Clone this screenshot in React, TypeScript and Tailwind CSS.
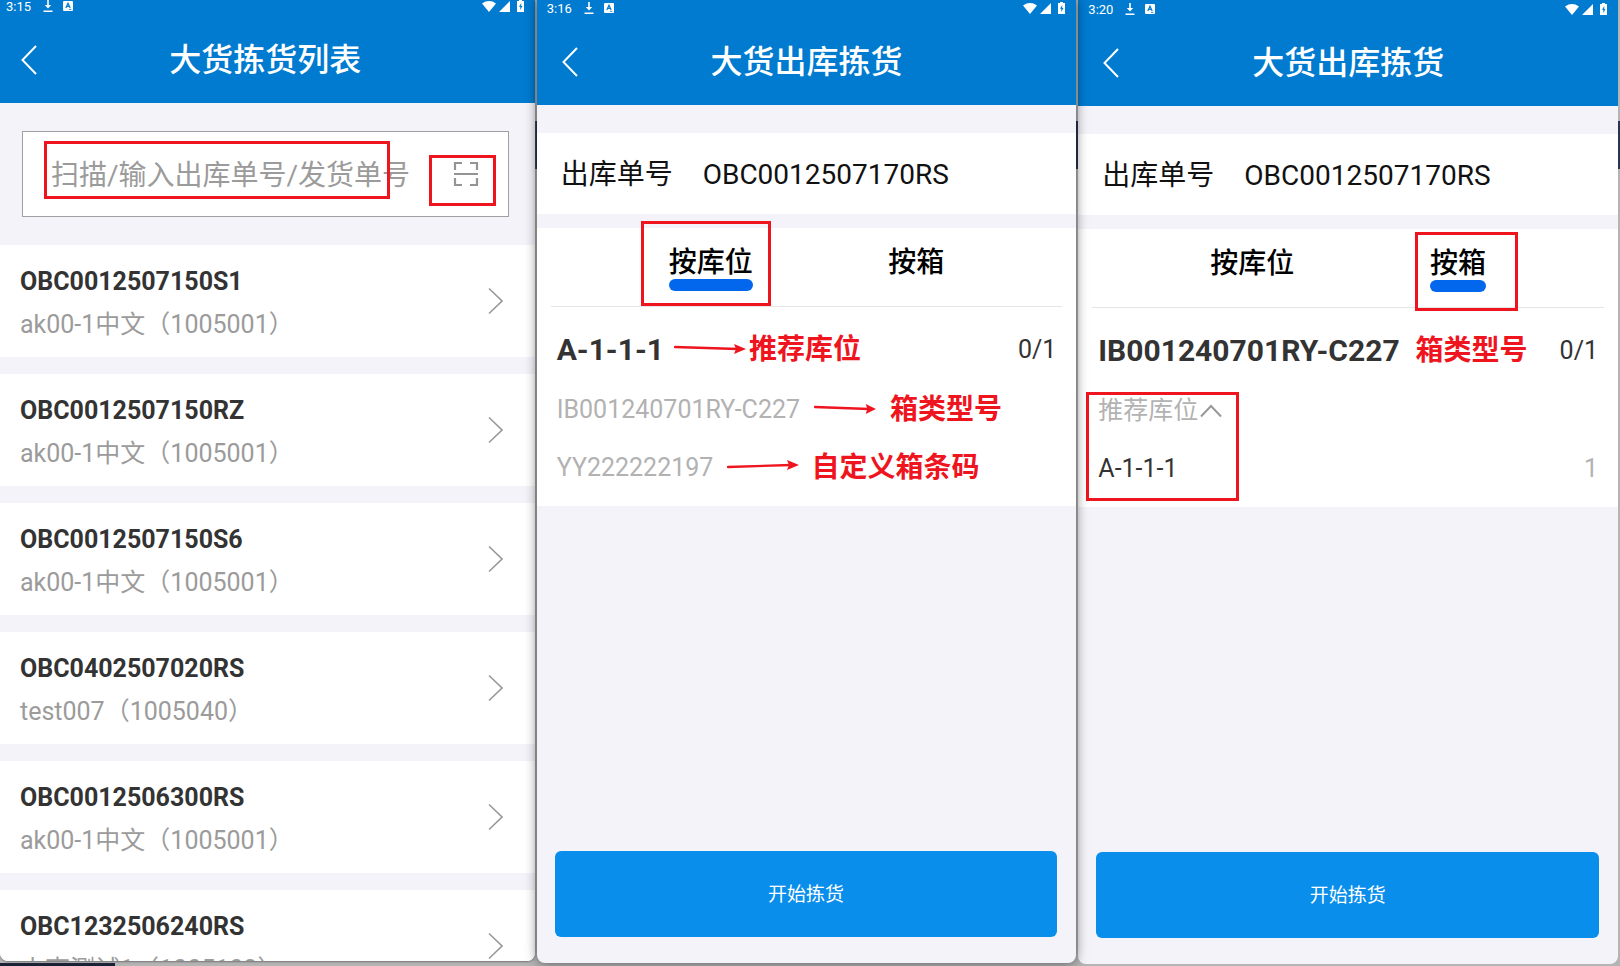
import React from 'react';

const orders = [
  { code: 'OBC0012507150S1', customer: 'ak00-1中文（1005001）' },
  { code: 'OBC0012507150RZ', customer: 'ak00-1中文（1005001）' },
  { code: 'OBC0012507150S6', customer: 'ak00-1中文（1005001）' },
  { code: 'OBC0402507020RS', customer: 'test007（1005040）' },
  { code: 'OBC0012506300RS', customer: 'ak00-1中文（1005001）' },
  { code: 'OBC1232506240RS', customer: '小李测试1（1005102）' },
];

function StatusBar({ time }: { time: string }) {
  return (
    <div className="flex h-[18px] items-center justify-between pl-1.5 pr-[11px] text-[13px] leading-none">
      <div className="flex items-center">
        <span>{time}</span>
        <svg className="ml-3 h-3 w-[10px]" viewBox="0 0 10 12" fill="currentColor">
          <path d="M4.2 0h1.6v5h2.4L5 8.4 1.8 5h2.4zM.5 10.6h9V12h-9z" />
        </svg>
        <svg className="ml-[10px] h-[10px] w-[10px]" viewBox="0 0 10 10">
          <rect width="10" height="10" rx="1" fill="currentColor" />
          <path d="M2.8 7 5 2.2 7.2 7M3.6 5.4h2.8" fill="none" stroke="#007bd0" strokeWidth="1.2" />
          <path d="M6 8.4h2.4" stroke="#007bd0" strokeWidth=".8" />
        </svg>
      </div>
      <div className="flex items-center gap-[3px]">
        <svg className="h-[11px] w-[14px]" viewBox="0 0 14 11" fill="currentColor">
          <path d="M0 2.4Q7-2.4 14 2.4L7 11z" />
        </svg>
        <svg className="h-[11px] w-[11px]" viewBox="0 0 11 11" fill="currentColor">
          <path d="M11 0v11H0z" />
        </svg>
        <svg className="ml-1 h-3 w-[7px]" viewBox="0 0 7 12">
          <path d="M2 0h3v1h2v11H0V1h2z" fill="currentColor" />
          <path d="M4.2 3 2 6.8h1.3V10l2.2-4H4.2z" fill="#007bd0" />
        </svg>
      </div>
    </div>
  );
}

function Header({ time, title, className = '' }: { time: string; title: string; className?: string }) {
  return (
    <header className={`shrink-0 bg-[#007bd0] text-white ${className}`}>
      <StatusBar time={time} />
      <div className="grid h-[88px] grid-cols-[56px_1fr_60px] items-center pt-0.5">
        <button type="button" aria-label="返回" className="pl-[21px]">
          <svg className="h-[30px] w-4" viewBox="0 0 16 30" fill="none" stroke="currentColor" strokeWidth="2">
            <path d="M15 1 1.5 15 15 29" />
          </svg>
        </button>
        <h1 className="text-center text-[32px] font-medium leading-10">{title}</h1>
      </div>
    </header>
  );
}

// Red frame drawn over whatever it highlights
function Mark({ className }: { className: string }) {
  return <span className={`pointer-events-none absolute border-3 border-[#ee151f] ${className}`} />;
}

function Arrow({ className, dy }: { className: string; dy: number }) {
  const w = 72;
  const y = 6;
  return (
    <svg className={`h-4 shrink-0 text-[#ee151f] ${className}`} viewBox={`0 0 ${w} 16`} preserveAspectRatio="none">
      <path d={`M1 ${y - dy} L${w - 8} ${y + dy}`} stroke="currentColor" strokeWidth="2.4" strokeLinecap="round" />
      <path d={`M${w - 12} ${y - 5 + dy} L${w} ${y + dy} L${w - 12} ${y + 5 + dy} L${w - 10} ${y + dy}z`} fill="currentColor" />
    </svg>
  );
}

function Note({ className, children }: { className: string; children: React.ReactNode }) {
  return <span className={`whitespace-nowrap text-[28px] font-bold leading-8 text-[#ee151f] ${className}`}>{children}</span>;
}

function ListScreen() {
  return (
    <section className="mb-[5px] flex min-w-0 flex-[535] flex-col overflow-hidden rounded-b-lg bg-[#f4f3f9] shadow-[0_1px_2px_#777]">
      <div className="-mt-[3px]">
        <Header time="3:15" title="大货拣货列表" />
      </div>
      <div className="relative ml-[22px] mr-[26px] mt-7 flex h-[86px] shrink-0 items-center border border-[#a0a0a0] bg-white pl-7 pr-[29px]">
        <input
          aria-label="扫描/输入出库单号/发货单号"
          placeholder="扫描/输入出库单号/发货单号"
          className="h-12 min-w-0 flex-1 pt-0.5 text-[28px] text-[#333] outline-none placeholder:text-[#9b9b9b]"
        />
        <button type="button" aria-label="扫描">
          <svg className="h-[26px] w-[26px]" viewBox="0 0 26 26" fill="none" stroke="#949494" strokeWidth="2.2">
            <path d="M2 9V2h7M17 2h7v7M2 17v7h7M17 24h7v-7M1 13h24" />
          </svg>
        </button>
        <Mark className="left-[21px] top-[9px] h-[58px] w-[346px]" />
        <Mark className="right-3 top-[23px] h-[51px] w-[67px]" />
      </div>
      <ul className="mt-7 flex min-h-0 flex-col gap-[17px] overflow-hidden">
        {orders.map((order) => (
          <li key={order.code} className="h-28 shrink-0 bg-white">
            <a href="#" className="flex h-full items-center justify-between pl-5 pr-8">
              <div className="pt-[3px]">
                <p className="text-[25px] font-bold leading-[43px] text-[#333]">{order.code}</p>
                <p className="text-[25px] leading-[43px] text-[#9b9b9b]">{order.customer}</p>
              </div>
              <svg className="h-7 w-[15px]" viewBox="0 0 15 28" fill="none" stroke="#999" strokeWidth="1.6">
                <path d="M1 1.5 14 14 1 26.5" />
              </svg>
            </a>
          </li>
        ))}
      </ul>
    </section>
  );
}

type Tab = 'location' | 'box';

function TabButton({ active, mark, children }: { active: boolean; mark: string; children: React.ReactNode }) {
  return (
    <button type="button" role="tab" aria-selected={active} className="relative flex flex-col items-center text-[28px] font-medium leading-8 text-black">
      {children}
      <span className={`h-3 w-full rounded-full ${active ? 'bg-[#0267ec]' : 'bg-transparent'}`} />
      {active && <Mark className={mark} />}
    </button>
  );
}

function PickScreen({ time, tab, className, children }: { time: string; tab: Tab; className: string; children: React.ReactNode }) {
  return (
    <section className={`flex min-w-0 flex-[540] flex-col overflow-hidden rounded-b-lg bg-[#f4f3f9] ${className}`}>
      <Header time={time} title="大货出库拣货" className="pl-1" />
      <div className="mt-7 flex h-[81px] shrink-0 items-center gap-[30px] bg-white pl-6 pt-[3px] text-[28px] text-[#111]">
        <span>出库单号</span>
        <span>OBC0012507170RS</span>
      </div>
      <div className="mt-[14px] flex h-[278px] shrink-0 flex-col bg-white">
        <div role="tablist" className="mx-[14px] flex h-[79px] items-start justify-between border-b border-[#e5e5e5] px-[118px] pt-[19px]">
          <TabButton active={tab === 'location'} mark="-bottom-[15px] -left-7 -right-[18px] -top-[26px]">
            按库位
          </TabButton>
          <TabButton active={tab === 'box'} mark="-bottom-[19px] -left-[15px] -right-8 -top-4">
            按箱
          </TabButton>
        </div>
        <div className="relative px-5 pt-[23px]">{children}</div>
      </div>
      <button type="button" className="ml-[18px] mr-[19px] mb-[26px] mt-auto h-[86px] shrink-0 rounded-md bg-[#098eeb] pt-0.5 text-[19px] text-white">
        开始拣货
      </button>
    </section>
  );
}

export default function App() {
  return (
    <main className="relative isolate flex h-screen gap-0.5 overflow-hidden bg-[#b4b4b4] pr-0.5 font-[Roboto,'Noto_Sans_CJK_SC',sans-serif]">
      {/* Window behind the phones, seen through the gaps */}
      <div className="absolute inset-x-0 top-[121px] -z-10 h-12 bg-[#2a3350]" />
      <div className="absolute bottom-0 left-0 -z-10 h-[3px] w-[115px] bg-[#1b2135]" />

      <ListScreen />

      <PickScreen time="3:16" tab="location" className="z-10 -mt-px mb-[3px] shadow-[0_0_12px_#0008]">
        <div className="flex h-10 items-center">
          <strong className="text-[30px] font-bold leading-8 text-[#333]">A-1-1-1</strong>
          <Arrow className="ml-2.5 w-[72px]" dy={1} />
          <Note className="ml-[3px]">推荐库位</Note>
          <span className="ml-auto text-[25px] text-[#333]">0/1</span>
        </div>
        <div className="mt-5 flex h-10 items-center">
          <span className="text-[25px] text-[#b2b2b2]">IB001240701RY-C227</span>
          <Arrow className="ml-3.5 w-[62px]" dy={1} />
          <Note className="ml-3.5">箱类型号</Note>
        </div>
        <div className="mt-[18px] flex h-10 items-center">
          <span className="text-[25px] text-[#b2b2b2]">YY222222197</span>
          <Arrow className="ml-3.5 w-[72px]" dy={-1} />
          <Note className="ml-3">自定义箱条码</Note>
        </div>
      </PickScreen>

      <PickScreen time="3:20" tab="box" className="mb-0.5">
        <div className="flex h-10 items-center">
          <strong className="text-[30px] font-bold leading-8 text-[#333]">IB001240701RY-C227</strong>
          <Note className="ml-4">箱类型号</Note>
          <span className="ml-auto text-[25px] text-[#333]">0/1</span>
        </div>
        <button type="button" aria-expanded="true" className="mt-5 flex h-10 items-center gap-0.5 text-[25px] text-[#b2b2b2]">
          推荐库位
          <svg className="h-3.5 w-[22px]" viewBox="0 0 22 14" fill="none" stroke="#999" strokeWidth="2">
            <path d="M1 12.5 11 2l10 10.5" />
          </svg>
        </button>
        <div className="mt-[18px] flex h-10 items-center justify-between text-[25px]">
          <span className="text-[#333]">A-1-1-1</span>
          <span className="text-[#b2b2b2]">1</span>
        </div>
        <Mark className="-bottom-3 left-2 h-[109px] w-[153px]" />
      </PickScreen>
    </main>
  );
}
